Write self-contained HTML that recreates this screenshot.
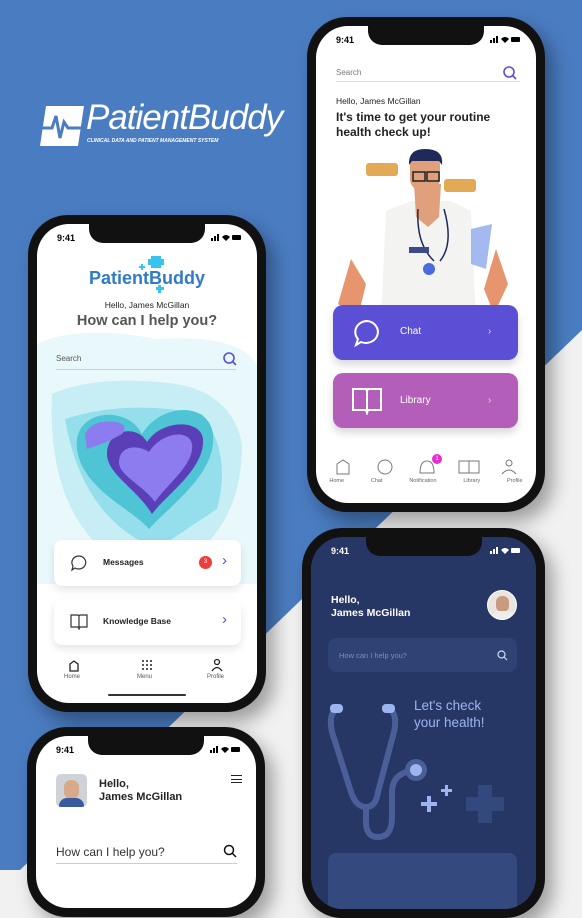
<!DOCTYPE html>
<html><head><meta charset="utf-8"><style>
*{margin:0;padding:0;box-sizing:border-box}
body{width:582px;height:870px;overflow:hidden;position:relative;font-family:"Liberation Sans",sans-serif;background:#f1f1f1}
.a{position:absolute}
.phone{position:absolute;background:#111;border-radius:40px;box-shadow:8px 10px 18px rgba(0,0,0,.35)}
.scr{position:absolute;left:9px;top:9px;right:9px;bottom:9px;border-radius:32px;background:#fff;overflow:hidden}
.notch{position:absolute;left:50%;margin-left:-58px;top:0;width:116px;height:19px;background:#111;border-radius:0 0 14px 14px}
.time{position:absolute;left:20px;top:9px;font-size:9px;font-weight:bold}
.st{position:absolute;right:16px;top:10px;width:30px;height:7px}
</style></head><body>
<svg class="a" style="left:0;top:0" width="582" height="870"><polygon points="0,0 582,0 582,330 20,870 0,870" fill="#4a7cc1"/></svg>

<!-- logo -->
<svg class="a" style="left:40px;top:102px" width="45" height="46"><polygon points="6,4 44,4 38,44 0,44" fill="#fff"/><polyline points="2,26 12,26 16,14 20,36 24,20 28,26 42,26" fill="none" stroke="#4a7cc1" stroke-width="3"/></svg>
<div class="a" style="left:86px;top:98px;font-size:35px;font-style:italic;color:#fff;letter-spacing:-1px">PatientBuddy</div>
<div class="a" style="left:87px;top:138px;font-size:5px;font-style:italic;font-weight:bold;color:#fff">CLINICAL DATA AND PATIENT MANAGEMENT SYSTEM</div>

<!-- Phone A -->
<div class="phone" style="left:307px;top:17px;width:238px;height:495px"><div class="scr">
<div class="notch"></div><div class="time">9:41</div>
<svg class="st" viewBox="0 0 30 7"><rect x="0" y="4" width="2" height="3"/><rect x="3" y="2" width="2" height="5"/><rect x="6" y="0" width="2" height="7"/><path d="M11 3 Q15 -1 19 3 L15 7Z"/><rect x="21" y="1" width="9" height="5" rx="1"/></svg>
<div class="a" style="left:20px;top:42px;font-size:8px;color:#777">Search</div>
<div class="a" style="left:20px;top:55px;width:184px;height:1px;background:#dde"></div>
<svg class="a" style="left:187px;top:40px" width="14" height="14"><circle cx="6" cy="6" r="5" fill="none" stroke="#5b4fd6" stroke-width="1.6"/><line x1="10" y1="10" x2="13" y2="13" stroke="#5b4fd6" stroke-width="1.6"/></svg>
<div class="a" style="left:20px;top:70px;font-size:8.5px;color:#222">Hello, James McGillan</div>
<div class="a" style="left:20px;top:84px;font-size:12px;font-weight:bold;color:#222;line-height:14.5px">It's time to get your routine<br>health check up!</div>
<svg class="a" style="left:0;top:113px" width="220" height="180">
<path d="M95 62 L135 62 L155 72 L160 180 L65 180 L70 72Z" fill="#f3f3f1"/>
<path d="M98 45 L125 45 L123 78 L112 88 L100 78Z" fill="#e0a07c"/>
<rect x="94" y="14" width="30" height="38" rx="12" fill="#e0a07c"/>
<path d="M93 26 Q92 10 109 10 Q128 10 126 26 L123 22 L96 22Z" fill="#1f2a5a"/>
<rect x="97" y="33" width="12" height="9" fill="none" stroke="#222" stroke-width="1.5"/><rect x="111" y="33" width="12" height="9" fill="none" stroke="#222" stroke-width="1.5"/>
<path d="M102 70 Q100 105 118 122 M128 70 Q138 105 124 122" fill="none" stroke="#1f2a5a" stroke-width="1.5"/>
<circle cx="113" cy="130" r="6" fill="#4a6adf"/><rect x="93" y="108" width="20" height="6" fill="#3b4a8a"/>
<path d="M22 165 L35 120 L50 145 L42 178Z" fill="#e07a4a" opacity=".8"/><path d="M168 150 L180 110 L192 145 L178 175Z" fill="#e07a4a" opacity=".8"/>
<path d="M155 90 L176 85 L170 130 L155 125Z" fill="#8ea8ee" opacity=".8"/>
<rect x="50" y="24" width="32" height="13" rx="3" fill="#e2aa55"/><rect x="128" y="40" width="32" height="13" rx="3" fill="#e2aa55"/>
</svg>
<div class="a" style="left:17px;top:279px;width:185px;height:55px;border-radius:10px;background:#5b4fd6;box-shadow:0 5px 8px rgba(0,0,0,.15)"></div>
<svg class="a" style="left:36px;top:292px" width="30" height="30"><path d="M15 3 A12 11 0 1 1 9 24 L4 27 L6 21 A12 11 0 0 1 15 3Z" fill="none" stroke="#fff" stroke-width="2"/></svg>
<div class="a" style="left:84px;top:300px;font-size:10px;color:#fff">Chat</div>
<div class="a" style="left:172px;top:300px;font-size:10px;color:#ddd">›</div>
<div class="a" style="left:17px;top:347px;width:185px;height:55px;border-radius:10px;background:#b35fba;box-shadow:0 5px 8px rgba(0,0,0,.15)"></div>
<svg class="a" style="left:35px;top:361px" width="32" height="28"><path d="M2 2 L15 2 L16 4 L17 2 L30 2 L30 23 L17 23 L16 26 L15 23 L2 23Z M16 4 V23" fill="none" stroke="#fff" stroke-width="2"/></svg>
<div class="a" style="left:84px;top:369px;font-size:10px;color:#fff">Library</div>
<div class="a" style="left:172px;top:369px;font-size:10px;color:#ddd">›</div>
<div class="a" style="left:0;top:452px;width:220px;font-size:5.5px;color:#666;display:flex;justify-content:space-around"><span>Home</span><span>Chat</span><span>Notification</span><span>Library</span><span>Profile</span></div>
<svg class="a" style="left:0;top:432px" width="220" height="18" fill="none" stroke="#777" stroke-width="1"><path d="M21 6 L27 2 L33 6 V16 H21Z"/><circle cx="69" cy="9" r="7"/><path d="M104 15 Q104 3 111 3 Q118 3 118 15Z"/><path d="M143 3 H163 V15 H143Z M153 3 V15"/><circle cx="193" cy="5" r="3"/><path d="M186 16 Q193 8 200 16"/></svg>
<div class="a" style="left:116px;top:428px;width:10px;height:10px;border-radius:5px;background:#e62bd0;color:#fff;font-size:6px;text-align:center;line-height:10px">1</div>
<div class="a" style="left:72px;top:478px;width:77px;height:2px;background:#333;border-radius:1px"></div>
</div></div>

<!-- Phone B -->
<div class="phone" style="left:28px;top:215px;width:238px;height:497px"><div class="scr">
<div class="notch"></div><div class="time">9:41</div>
<svg class="st" viewBox="0 0 30 7"><rect x="0" y="4" width="2" height="3"/><rect x="3" y="2" width="2" height="5"/><rect x="6" y="0" width="2" height="7"/><path d="M11 3 Q15 -1 19 3 L15 7Z"/><rect x="21" y="1" width="9" height="5" rx="1"/></svg>
<svg class="a" style="left:0;top:100px" width="220" height="260">
<path d="M0 20 Q40 0 120 15 Q200 10 220 40 L220 260 L0 260Z" fill="#e9f8fb"/>
<path d="M15 70 Q60 50 140 60 Q195 70 205 120 Q205 200 150 235 L70 230 Q10 180 15 70Z" fill="#c7eef5"/>
<path d="M28 95 Q90 75 165 90 Q195 130 180 185 L120 225 Q45 195 28 95Z" fill="#94dfeb"/>
<path d="M105 110 C90 80 35 85 40 125 C45 165 95 185 112 205 C132 182 180 150 176 110 C172 78 125 78 105 110Z" fill="#4fc4d4"/>
<path d="M110 118 C100 100 70 105 70 130 C70 150 100 165 115 190 C130 170 168 145 166 115 C164 95 125 95 110 118Z" fill="#5b3fb8"/>
<path d="M112 128 C100 120 82 122 82 138 C82 152 105 160 118 178 C130 160 158 140 155 120 C152 105 125 108 112 128Z" fill="#8d7bf0"/>
<path d="M48 110 Q55 95 80 98 Q92 102 85 110 L70 118 L50 125Z" fill="#8d7bf0"/>
</svg>
<div class="a" style="left:0;top:44px;width:220px;text-align:center;font-size:18px;font-weight:bold;color:#2f7bc7">PatientBuddy</div>
<svg class="a" style="left:102px;top:32px" width="26" height="40" fill="#36c4ec"><rect x="12" y="0" width="10" height="12"/><rect x="9" y="3" width="16" height="6"/><rect x="0" y="10" width="6" height="2"/><rect x="2" y="8" width="2" height="6"/><rect x="17" y="31" width="8" height="3"/><rect x="19" y="29" width="3" height="8"/></svg>
<div class="a" style="left:0;top:76px;width:220px;text-align:center;font-size:8.5px;color:#222">Hello, James McGillan</div>
<div class="a" style="left:0;top:89px;width:220px;text-align:center;font-size:14.5px;font-weight:bold;color:#555">How can I help you?</div>
<div class="a" style="left:19px;top:130px;font-size:8px;color:#555">Search</div>
<div class="a" style="left:19px;top:145px;width:180px;height:1px;background:#ccd"></div>
<svg class="a" style="left:186px;top:128px" width="14" height="14"><circle cx="6" cy="6" r="5" fill="none" stroke="#5b4fd6" stroke-width="1.6"/><line x1="10" y1="10" x2="13" y2="13" stroke="#5b4fd6" stroke-width="1.6"/></svg>
<div class="a" style="left:17px;top:316px;width:187px;height:46px;border-radius:8px;background:#fff;box-shadow:0 4px 8px rgba(0,0,0,.1)"></div>
<svg class="a" style="left:33px;top:330px" width="18" height="18"><path d="M9 2 A7 6.5 0 1 1 5 14 L2 16 L3 12 A7 6.5 0 0 1 9 2Z" fill="none" stroke="#333" stroke-width="1.2"/></svg>
<div class="a" style="left:66px;top:333px;font-size:8.5px;font-weight:bold;color:#222">Messages</div>
<div class="a" style="left:162px;top:332px;width:13px;height:13px;border-radius:7px;background:#ee3b3b;color:#fff;font-size:6px;text-align:center;line-height:13px">3</div>
<div class="a" style="left:185px;top:328px;font-size:15px;color:#5b4fd6">›</div>
<div class="a" style="left:17px;top:375px;width:187px;height:46px;border-radius:8px;background:#fff;box-shadow:0 4px 8px rgba(0,0,0,.1)"></div>
<svg class="a" style="left:33px;top:390px" width="18" height="16"><path d="M1 1 H8 L9 2 L10 1 H17 V13 H10 L9 15 L8 13 H1Z M9 2 V13" fill="none" stroke="#333" stroke-width="1.2"/></svg>
<div class="a" style="left:66px;top:392px;font-size:8.5px;font-weight:bold;color:#222">Knowledge Base</div>
<div class="a" style="left:185px;top:387px;font-size:15px;color:#5b4fd6">›</div>
<svg class="a" style="left:0;top:434px" width="220" height="16" fill="none" stroke="#222" stroke-width="1.3"><path d="M33 6 L37 3 L41 6 V13 H33Z"/><g fill="#222" stroke="none"><circle cx="106" cy="3" r="1"/><circle cx="110" cy="3" r="1"/><circle cx="114" cy="3" r="1"/><circle cx="106" cy="7" r="1"/><circle cx="110" cy="7" r="1"/><circle cx="114" cy="7" r="1"/><circle cx="106" cy="11" r="1"/><circle cx="110" cy="11" r="1"/><circle cx="114" cy="11" r="1"/></g><circle cx="180" cy="4" r="2.5"/><path d="M175 13 Q180 6 185 13"/></svg>
<div class="a" style="left:0;top:450px;width:220px;font-size:6px;color:#555"><span class="a" style="left:27px">Home</span><span class="a" style="left:100px">Menu</span><span class="a" style="left:170px">Profile</span></div>
<div class="a" style="left:71px;top:470px;width:78px;height:2px;background:#333;border-radius:1px"></div>
</div></div>

<!-- Phone C -->
<div class="phone" style="left:27px;top:727px;width:238px;height:190px"><div class="scr">
<div class="notch"></div><div class="time">9:41</div>
<svg class="st" viewBox="0 0 30 7"><rect x="0" y="4" width="2" height="3"/><rect x="3" y="2" width="2" height="5"/><rect x="6" y="0" width="2" height="7"/><path d="M11 3 Q15 -1 19 3 L15 7Z"/><rect x="21" y="1" width="9" height="5" rx="1"/></svg>
<div class="a" style="left:20px;top:38px;width:31px;height:33px;border-radius:5px;background:#cfd3d8;overflow:hidden"><div class="a" style="left:8px;top:6px;width:15px;height:19px;border-radius:7px;background:#d9a98c"></div><div class="a" style="left:3px;top:24px;width:25px;height:12px;border-radius:8px 8px 0 0;background:#3a5aa0"></div></div>
<div class="a" style="left:63px;top:42px;font-size:11px;font-weight:bold;color:#222;line-height:13px">Hello,<br>James McGillan</div>
<div class="a" style="left:195px;top:39px;width:11px;height:8px;border-top:1.5px solid #222;border-bottom:1.5px solid #222"></div>
<div class="a" style="left:195px;top:42.5px;width:11px;height:1.5px;background:#222"></div>
<div class="a" style="left:20px;top:109px;font-size:12px;color:#333">How can I help you?</div>
<svg class="a" style="left:187px;top:108px" width="14" height="14"><circle cx="6" cy="6" r="4.5" fill="none" stroke="#111" stroke-width="1.5"/><line x1="9.5" y1="9.5" x2="13" y2="13" stroke="#111" stroke-width="1.5"/></svg>
<div class="a" style="left:20px;top:127px;width:181px;height:1px;background:#ccc"></div>
</div></div>

<!-- Phone D -->
<div class="phone" style="left:302px;top:528px;width:243px;height:390px"><div class="scr" style="background:#263766">
<div class="notch"></div><div class="time" style="color:#fff">9:41</div>
<svg class="st" viewBox="0 0 30 7" fill="#fff"><rect x="0" y="4" width="2" height="3"/><rect x="3" y="2" width="2" height="5"/><rect x="6" y="0" width="2" height="7"/><path d="M11 3 Q15 -1 19 3 L15 7Z"/><rect x="21" y="1" width="9" height="5" rx="1"/></svg>
<div class="a" style="left:20px;top:57px;font-size:10.5px;font-weight:bold;color:#fff;line-height:13px">Hello,<br>James McGillan</div>
<div class="a" style="left:176px;top:53px;width:30px;height:30px;border-radius:15px;background:#e8e4e0;overflow:hidden;border:1px solid #fff"><div class="a" style="left:8px;top:5px;width:13px;height:16px;border-radius:6px;background:#c99a80"></div><div class="a" style="left:3px;top:20px;width:24px;height:12px;border-radius:8px 8px 0 0;background:#eee"></div></div>
<div class="a" style="left:17px;top:101px;width:189px;height:34px;border-radius:8px;background:#2e4374"></div>
<div class="a" style="left:28px;top:114px;font-size:7.5px;color:#7d8fb9">How can I help you?</div>
<svg class="a" style="left:186px;top:113px" width="11" height="11"><circle cx="4.5" cy="4.5" r="3.5" fill="none" stroke="#cfd8ee" stroke-width="1.2"/><line x1="7" y1="7" x2="10" y2="10" stroke="#cfd8ee" stroke-width="1.2"/></svg>
<div class="a" style="left:103px;top:160px;font-size:13.5px;color:#9db4f0;line-height:17px">Let's check<br>your health!</div>
<svg class="a" style="left:15px;top:160px" width="200" height="150"><path d="M12 12 Q2 15 6 35 L25 95 Q30 110 40 110 Q50 110 52 95 L68 35 Q72 15 62 12" fill="none" stroke="#4a5f97" stroke-width="6"/><path d="M40 110 L40 125 Q40 140 52 140 Q66 140 66 120 L66 95 Q66 80 80 75" fill="none" stroke="#4a5f97" stroke-width="6"/><circle cx="90" cy="73" r="11" fill="#4a5f97"/><circle cx="90" cy="73" r="6" fill="#9db4f0"/><rect x="4" y="7" width="13" height="9" rx="4" fill="#9db4f0"/><rect x="56" y="7" width="13" height="9" rx="4" fill="#9db4f0"/><path d="M95 105 h6 v-6 h4 v6 h6 v4 h-6 v6 h-4 v-6 h-6z" fill="#9db4f0"/><path d="M115 92 h4 v-4 h3 v4 h4 v3 h-4 v4 h-3 v-4 h-4z" fill="#9db4f0"/><path d="M140 100 h12 v-12 h14 v12 h12 v14 h-12 v12 h-14 v-12 h-12z" fill="#33487c"/></svg>
<div class="a" style="left:17px;top:316px;width:189px;height:60px;border-radius:8px;background:#34497d"></div>
</div></div>
</body></html>
